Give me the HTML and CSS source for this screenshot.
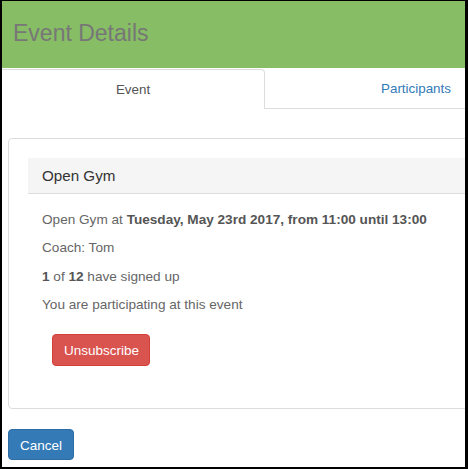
FILE: index.html
```html
<!DOCTYPE html>
<html>
<head>
<meta charset="utf-8">
<link rel="stylesheet" href="styles.css">
</head>
<body>
<div class="frame">
  <div class="page">
    <header class="topbar"><h1 class="title">Event Details</h1></header>
    <nav class="tabs">
      <div class="tab active">Event</div>
      <div class="tab link">Participants</div>
      <div class="tab-rest"></div>
    </nav>
    <div class="content">
      <section class="panel">
        <div class="panel-heading">Open Gym</div>
        <div class="panel-body">
          <p>Open Gym at <b>Tuesday, May 23rd 2017, from 11:00 until 13:00</b></p>
          <p>Coach: Tom</p>
          <p><b>1</b> of <b>12</b> have signed up</p>
          <p>You are participating at this event</p>
          <button class="btn btn-danger">Unsubscribe</button>
        </div>
      </section>
      <button class="btn btn-primary">Cancel</button>
    </div>
  </div>
</div>
</body>
</html>
```
FILE: styles.css
```css
* { box-sizing: border-box; }
html, body { margin: 0; padding: 0; background: #000; }
body { font-family: "Liberation Sans", Arial, sans-serif; font-size: 13.6px; }
.frame {
  width: 468px;
  height: 469px;
  border-left: 2px solid #000;
  border-top: 1px solid #000;
  border-right: 3px solid #000;
  border-bottom: 2px solid #000;
  background: #fff;
  overflow: hidden;
}
.page { width: 700px; }
.topbar {
  height: 67px;
  background: #87bd65;
  padding: 0 0 0 11px;
}
.title {
  margin: 0;
  font-weight: normal;
  font-size: 23px;
  line-height: 64px;
  color: #777;
}
.tabs {
  display: flex;
  height: 40px;
  margin-top: 1px;
}
.tab {
  height: 40px;
  line-height: 39px;
  text-align: center;
  font-size: 13.4px;
}
.tab.active {
  width: 263px;
  color: #555;
  border-top: 1px solid #ddd;
  border-right: 1px solid #ddd;
  border-top-right-radius: 4px;
}
.tab.link {
  width: 302px;
  color: #337ab7;
  border-bottom: 1px solid #ddd;
}
.tab-rest { flex: 1; border-bottom: 1px solid #ddd; }
.content { padding: 29px 0 0 6px; }
.panel {
  width: 600px;
  border: 1px solid #ddd;
  border-radius: 4px;
  padding: 19px 19px 42px 19px;
}
.panel-heading {
  background: #f5f5f5;
  border-bottom: 1px solid #ddd;
  height: 36px;
  line-height: 35px;
  padding: 0 14px;
  font-size: 15.2px;
  color: #333;
}
.panel-body { padding: 16px 14px 0; color: #666; }
.panel-body p { margin: 0 0 8.4px; line-height: 20px; }
.panel-body b { color: #555; }
.btn {
  display: block;
  font-family: "Liberation Sans", Arial, sans-serif;
  font-size: 13.5px;
  line-height: 20px;
  padding: 5px 11px 3px;
  border-radius: 4px;
  border: 1px solid transparent;
  color: #fff;
}
.btn-danger {
  margin: 19px 0 0 10px;
  background: #d9534f;
  border-color: #d43f3a;
  height: 32px;
  width: 98px;
}
.btn-primary {
  margin-top: 20px;
  background: #337ab7;
  border-color: #2e6da4;
  height: 31px;
  width: 66px;
}
```
